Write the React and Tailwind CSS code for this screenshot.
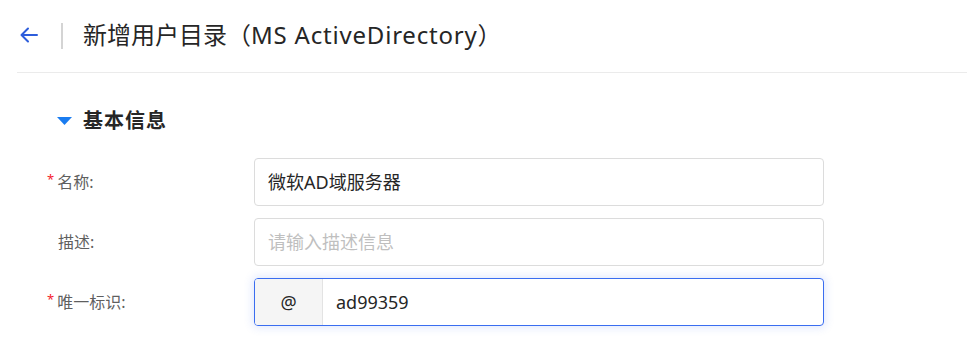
export default function App() {
  const font = { fontFamily: '"Noto Sans", "Noto Sans CJK SC", sans-serif' };
  return (
    <div className="w-[967px] h-[355px] bg-white overflow-hidden" style={font}>
      <div className="flex items-center h-[72px] pl-[20px]">
        <svg width="18" height="16" viewBox="0 0 18 16" className="mt-[-2px]">
          <path d="M17 8H2M8 1.5L1.5 8L8 14.5" fill="none" stroke="#2d5ddb" strokeWidth="2" strokeLinecap="round" strokeLinejoin="round" />
        </svg>
        <div className="ml-[23px] w-[2px] h-[26px] bg-[#d4d4d4]" />
        <div className="ml-[20px] text-[24px] text-[#262626] leading-none mt-[-2px] whitespace-nowrap">
          新增用户目录（<span className="tracking-[0.8px]">MS ActiveDirectory</span>）
        </div>
      </div>
      <div className="ml-[17px] h-px bg-[#ebebeb]" />
      <div className="flex items-center mt-[36px] ml-[57px] h-[24px]">
        <svg width="15" height="8" viewBox="0 0 15 8">
          <path d="M0 0H15L7.5 8Z" fill="#1a7cf0" />
        </svg>
        <div className="ml-[11px] text-[20px] font-bold text-[#262626] leading-none tracking-[1px]">基本信息</div>
      </div>
      <div className="flex flex-col gap-[12px] mt-[25px]">
        <div className="flex items-center">
          <div className="w-[254px] flex items-center pl-[47px] text-[16px] text-[#5f5f5f]">
            <span className="text-[#f5222d] text-[13px] mr-[3px] mt-[-4px]">*</span>名称:
          </div>
          <div className="w-[570px] h-[48px] border border-[#dcdcdc] rounded-[4px] flex items-center px-[13px] text-[18px] text-[#262626]">
            微软AD域服务器
          </div>
        </div>
        <div className="flex items-center">
          <div className="w-[254px] flex items-center pl-[58px] text-[16px] text-[#5f5f5f]">描述:</div>
          <div className="w-[570px] h-[48px] border border-[#dcdcdc] rounded-[4px] flex items-center px-[13px] text-[18px] text-[#bfbfbf]">
            请输入描述信息
          </div>
        </div>
        <div className="flex items-center">
          <div className="w-[254px] flex items-center pl-[47px] text-[16px] text-[#5f5f5f]">
            <span className="text-[#f5222d] text-[13px] mr-[3px] mt-[-4px]">*</span>唯一标识:
          </div>
          <div className="w-[570px] h-[48px] border border-[#3a6df0] rounded-[4px] flex overflow-hidden shadow-[0_0_8px_2px_rgba(58,109,240,0.15)]">
            <div className="w-[68px] bg-[#f5f5f5] border-r border-[#e3e3e3] flex items-center justify-center text-[18px] text-[#262626]">@</div>
            <div className="flex-1 flex items-center px-[13px] text-[18px] text-[#262626]">ad99359</div>
          </div>
        </div>
      </div>
    </div>
  );
}
